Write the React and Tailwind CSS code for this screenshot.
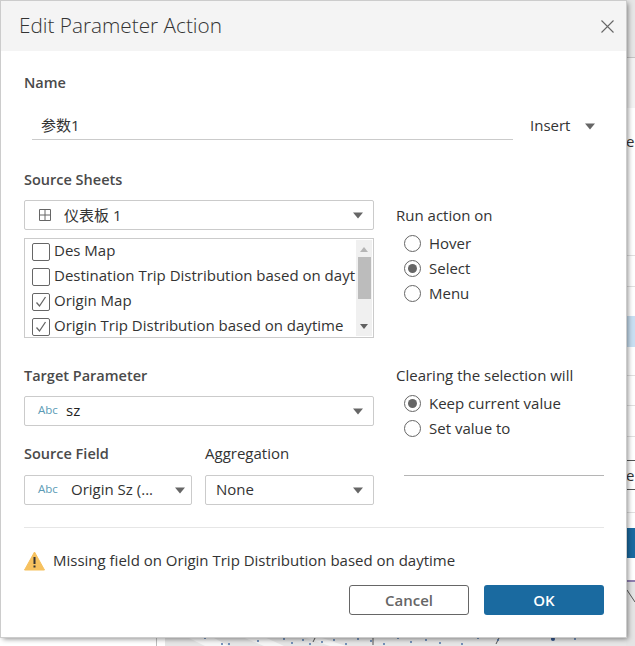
const font = { fontFamily: '"Open Sans", "Noto Sans CJK SC", sans-serif' };

const mapDots = [
  [168, 1], [205, 2], [222, 8], [229, 8], [258, 5], [284, 3], [292, 7], [303, 4], [310, 8], [322, 6], [334, 4], [346, 8], [358, 3],
  [371, 5], [384, 8], [398, 2], [411, 6], [426, 4], [440, 7], [462, 8], [478, 2], [498, 4], [552, 3], [575, 3],
];

function Caret({ className = '' }) {
  return (
    <svg className={`w-[10px] h-[7px] shrink-0 ${className}`} viewBox="0 0 10 7">
      <path d="M0 0.5h10L5 6.5z" fill="#666666" />
    </svg>
  );
}

function Abc({ className = '' }) {
  return <span className={`text-[11.5px] pb-[2px] text-[#5b9bb5] w-[28px] shrink-0 ${className}`}>Abc</span>;
}

function Select({ className = '', children }) {
  return (
    <div className={`h-[30px] border border-[#cbcbcb] rounded-[2px] flex items-center pr-[10px] ${className}`}>
      {children}
    </div>
  );
}

function Label({ bold, className = '', children }) {
  return (
    <div className={`h-[20px] ${bold ? 'leading-[20px] text-[14.5px] font-semibold text-[#4a4a4a]' : 'leading-[18px]'} ${className}`}>
      {children}
    </div>
  );
}

function Check({ checked, label }) {
  return (
    <div className="h-[25px] flex items-center gap-[4px] whitespace-nowrap overflow-hidden">
      <div className="w-[18px] h-[18px] shrink-0 border border-[#666666] rounded-[2px] flex items-center justify-center">
        {checked && (
          <svg className="w-[14px] h-[14px]" viewBox="0 0 14 14" fill="none">
            <path d="M2.5 7.5l3 3.5 6-9" stroke="#666666" strokeWidth="1.3" />
          </svg>
        )}
      </div>
      <span className="pb-[2px]">{label}</span>
    </div>
  );
}

function Radio({ checked, label }) {
  return (
    <div className="h-[25px] flex items-center gap-[8px]">
      <div className="w-[17px] h-[17px] rounded-full border border-[#666666] flex items-center justify-center">
        {checked && <div className="w-[9px] h-[9px] rounded-full bg-[#666666]" />}
      </div>
      <span>{label}</span>
    </div>
  );
}

export default function App() {
  return (
    <div className="relative w-[635px] h-[646px] overflow-hidden bg-white text-[15px] text-[#333333]" style={font}>
      {/* page behind the dialog */}
      <div className="absolute right-0 top-0 bottom-0 w-[9px] flex flex-col bg-white">
        <div className="h-[58px] shrink-0 bg-[#e6e6e6] border-b border-[#c4c4c4]" />
        <div className="h-[50px] shrink-0 bg-[#f3f3f3]" />
        <div className="h-[148px] shrink-0 border-b border-[#e0e0e0] pt-[22px] leading-[22px] overflow-hidden whitespace-nowrap">ee</div>
        <div className="h-[31px] shrink-0 border-b border-[#e0e0e0]" />
        <div className="h-[29px] shrink-0" />
        <div className="h-[31px] shrink-0 bg-[#c8dff2]" />
        <div className="h-[29px] shrink-0 border-b border-[#e0e0e0]" />
        <div className="h-[30px] shrink-0 border-b border-[#e0e0e0]" />
        <div className="h-[31px] shrink-0 border-b border-[#e0e0e0]" />
        <div className="h-[24px] shrink-0 border-b border-[#555555]" />
        <div className="h-[29px] shrink-0 border-b border-[#555555] leading-[28px] overflow-hidden">e</div>
        <div className="h-[23px] shrink-0 border-b border-[#e0e0e0]" />
        <div className="h-[15px] shrink-0" />
        <div className="h-[30px] shrink-0 bg-[#1a6aa0]" />
        <div className="h-[22px] shrink-0" />
        <div className="flex-1 bg-[#e4e4e4] border-t-2 border-[#8f7fb0]" />
      </div>
      <svg className="absolute left-[156px] top-[636px]" width="470" height="10" viewBox="156 0 470 10">
        <path d="M156.5 0v10" stroke="#bdbdbd" />
        <path d="M165 0h461v10H165z" fill="#e6e6e6" />
        <path d="M185 0l20 10h24L210 0zM240 0l24 10h20L262 0zM300 0l30 10h16L316 0z" fill="#f6f6f6" />
        <path d="M316 0l-3 6M373 0v9M500 0l-4 8" stroke="#555555" fill="none" />
        {mapDots.map(([x, y]) => (
          <circle key={`${x}-${y}`} cx={x} cy={y} r="1" fill="#4f75a8" />
        ))}
        <circle cx="553" cy="3" r="2" fill="#34558b" />
      </svg>
      <svg className="absolute left-[627px] top-[590px]" width="8" height="20" viewBox="0 0 8 20">
        <path d="M0 0l8 12" stroke="#555555" fill="none" />
      </svg>

      {/* dialog */}
      <div className="absolute left-[1px] top-[1px] w-[625px] h-[636px] bg-white flex flex-col shadow-[0_0_0_1px_#cccccc,2px_2px_5px_rgba(0,0,0,0.45)]">
        <div className="h-[50px] shrink-0 bg-[#f4f4f4] flex items-center justify-between pl-[18px] pr-[12px]">
          <span className="text-[20.75px] font-light text-[#333333] pb-[1px]">Edit Parameter Action</span>
          <svg className="w-[13px] h-[13px]" viewBox="0 0 13 13" fill="none">
            <path d="M0.5 0.5l12 12M12.5 0.5l-12 12" stroke="#666666" strokeWidth="1.1" />
          </svg>
        </div>

        <div className="flex-1 pl-[23px] pr-[22px] flex flex-col">
          <Label bold className="mt-[22px]">Name</Label>
          <div className="mt-[19px] flex items-start">
            <div className="w-[481px] ml-[8px] h-[28px] border-b border-[#cbcbcb] pl-[9px] leading-[27px]">参数1</div>
            <div className="ml-[17px] h-[28px] flex items-center gap-[15px]">
              <span className="pb-[2px]">Insert</span>
              <Caret />
            </div>
          </div>

          <Label bold className="mt-[30px]">Source Sheets</Label>
          <div className="mt-[10px] flex">
            <div className="w-[350px] shrink-0">
              <Select className="justify-between">
                <div className="flex items-center">
                  <svg className="w-[14px] h-[14px] ml-[13px] mr-[12px]" viewBox="0 0 14 14" fill="none">
                    <path d="M1.5 1.5h11v11h-11zM7 1.5v11M1.5 7h11" stroke="#666666" />
                  </svg>
                  <span>仪表板 1</span>
                </div>
                <Caret />
              </Select>
              <div className="mt-[8px] h-[100px] border border-[#cbcbcb] flex pl-[7px] pr-[1px]">
                <div className="flex-1 min-w-0 overflow-hidden">
                  <Check label="Des Map" />
                  <Check label="Destination Trip Distribution based on dayt" />
                  <Check checked label="Origin Map" />
                  <Check checked label="Origin Trip Distribution based on daytime" />
                </div>
                <div className="w-[16px] shrink-0 bg-[#f0f0f0] flex flex-col items-center my-px">
                  <svg className="w-[8px] h-[5px] mt-[7px]" viewBox="0 0 8 5"><path d="M4 0l4 5H0z" fill="#b5b5b5" /></svg>
                  <div className="w-[13px] h-[42px] mt-[5px] bg-[#bcbcbc]" />
                  <svg className="w-[8px] h-[5px] mt-auto mb-[7px]" viewBox="0 0 8 5"><path d="M0 0h8L4 5z" fill="#606060" /></svg>
                </div>
              </div>
            </div>
            <div className="ml-[22px] flex-1">
              <Label className="mt-[6px]">Run action on</Label>
              <div className="mt-[5px] ml-[8px]">
                <Radio label="Hover" />
                <Radio checked label="Select" />
                <Radio label="Menu" />
              </div>
            </div>
          </div>

          <div className="mt-[28px] flex">
            <div className="w-[350px] shrink-0">
              <Label bold>Target Parameter</Label>
              <Select className="mt-[10px] justify-between">
                <div className="flex items-center pl-[13px]">
                  <Abc />
                  <span className="pb-[2px] text-[#222222]">sz</span>
                </div>
                <Caret />
              </Select>
              <div className="mt-[18px] flex gap-[13px]">
                <div className="w-[168px]">
                  <Label bold>Source Field</Label>
                  <Select className="mt-[11px] justify-between">
                    <div className="flex items-center pl-[13px] whitespace-nowrap">
                      <Abc className="w-[33px]" />
                      <span className="pb-[2px]">Origin Sz (...</span>
                    </div>
                    <Caret className="-mr-[4px]" />
                  </Select>
                </div>
                <div className="w-[169px]">
                  <Label>Aggregation</Label>
                  <Select className="mt-[11px] justify-between pl-[10px]">
                    <span className="pb-[2px]">None</span>
                    <Caret />
                  </Select>
                </div>
              </div>
            </div>
            <div className="ml-[22px] flex-1">
              <Label>Clearing the selection will</Label>
              <div className="mt-[5px] ml-[8px]">
                <Radio checked label="Keep current value" />
                <Radio label="Set value to" />
              </div>
              <div className="mt-[34px] ml-[8px] border-b border-[#b5b5b5]" />
            </div>
          </div>

          <div className="mt-[22px] border-t border-[#e6e6e6]" />
          <div className="mt-[21px] flex items-center gap-[8px] h-[24px]">
            <svg className="w-[21px] h-[20px]" viewBox="0 0 21 20">
              <path d="M10.5 1L20.5 19H0.5z" fill="#f6c15f" stroke="#f6c15f" strokeLinejoin="round" />
              <path d="M9.5 6h2v7h-2zM9.5 14.5h2v2h-2z" fill="#333333" />
            </svg>
            <span className="pb-[2px]">Missing field on Origin Trip Distribution based on daytime</span>
          </div>
          <div className="mt-[12px] flex justify-end gap-[15px] font-semibold">
            <div className="w-[120px] h-[30px] border border-[#666666] rounded-[3px] flex items-center justify-center text-[#666666]">Cancel</div>
            <div className="w-[120px] h-[30px] bg-[#1a6aa0] rounded-[3px] flex items-center justify-center text-white">OK</div>
          </div>
        </div>
      </div>
    </div>
  );
}
